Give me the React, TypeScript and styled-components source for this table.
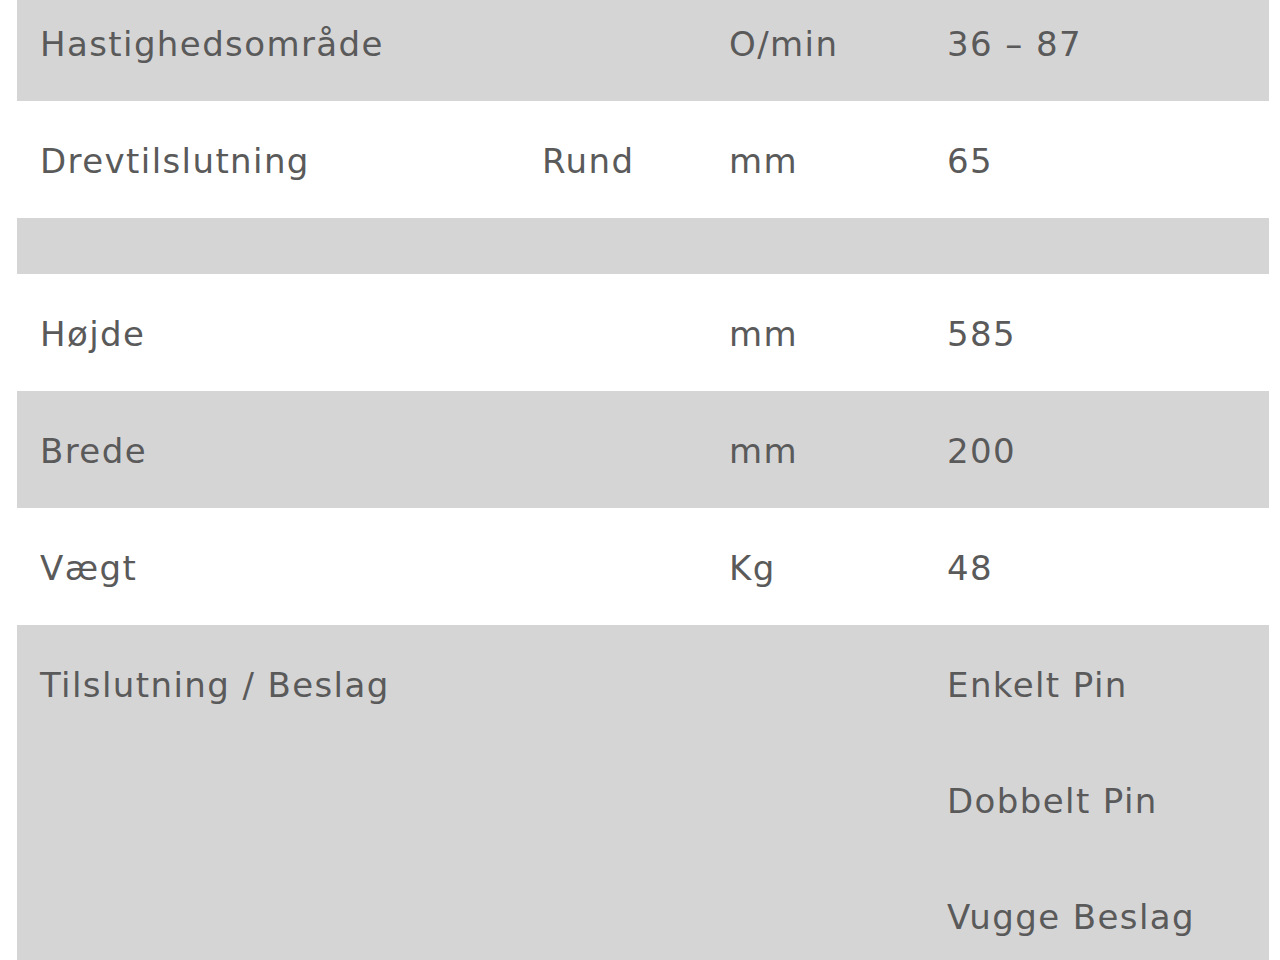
import React from 'react';
import styled, { createGlobalStyle } from 'styled-components';

const GlobalStyle = createGlobalStyle`
  html, body {
    margin: 0;
    padding: 0;
    background: #ffffff;
    overflow: hidden;
  }
`;

const s = {
  Page: styled.div`
    width: 1280px;
    height: 960px;
    overflow: hidden;
    box-sizing: border-box;
    padding: 0 11px 0 17px;
  `,
  Table: styled.div`
    margin-top: -16px;
    display: flex;
    flex-direction: column;
  `,
  Row: styled.div<{ $shaded: boolean }>`
    display: grid;
    grid-template-columns: 502px 187px 218px 1fr;
    padding: 30px 0 26px;
    background: ${(p) => (p.$shaded ? '#d6d5d6' : '#ffffff')};
  `,
  Cell: styled.div`
    padding-left: 23px;
    display: flex;
    flex-direction: column;
    gap: 55px;
    font-family: 'DejaVu Sans', 'Liberation Sans', sans-serif;
    font-size: 34px;
    letter-spacing: 1.4px;
    line-height: 61px;
    color: #5a5a5a;
    white-space: nowrap;
  `,
};

interface SpecRow {
  label: string;
  type?: string;
  unit?: string;
  values: string[];
}

const rows: SpecRow[] = [
  { label: 'Hastighedsområde', unit: 'O/min', values: ['36 – 87'] },
  { label: 'Drevtilslutning', type: 'Rund', unit: 'mm', values: ['65'] },
  { label: '', values: [] },
  { label: 'Højde', unit: 'mm', values: ['585'] },
  { label: 'Brede', unit: 'mm', values: ['200'] },
  { label: 'Vægt', unit: 'Kg', values: ['48'] },
  { label: 'Tilslutning / Beslag', values: ['Enkelt Pin', 'Dobbelt Pin', 'Vugge Beslag'] },
];

const App = (): JSX.Element => {
  return (
    <>
      <GlobalStyle />
      <s.Page>
        <s.Table>
          {rows.map((row, i) => (
            <s.Row key={i} $shaded={i % 2 === 0}>
              <s.Cell>{row.label}</s.Cell>
              <s.Cell>{row.type}</s.Cell>
              <s.Cell>{row.unit}</s.Cell>
              <s.Cell>
                {row.values.map((v) => (
                  <span key={v}>{v}</span>
                ))}
              </s.Cell>
            </s.Row>
          ))}
        </s.Table>
      </s.Page>
    </>
  );
};

export default App;
